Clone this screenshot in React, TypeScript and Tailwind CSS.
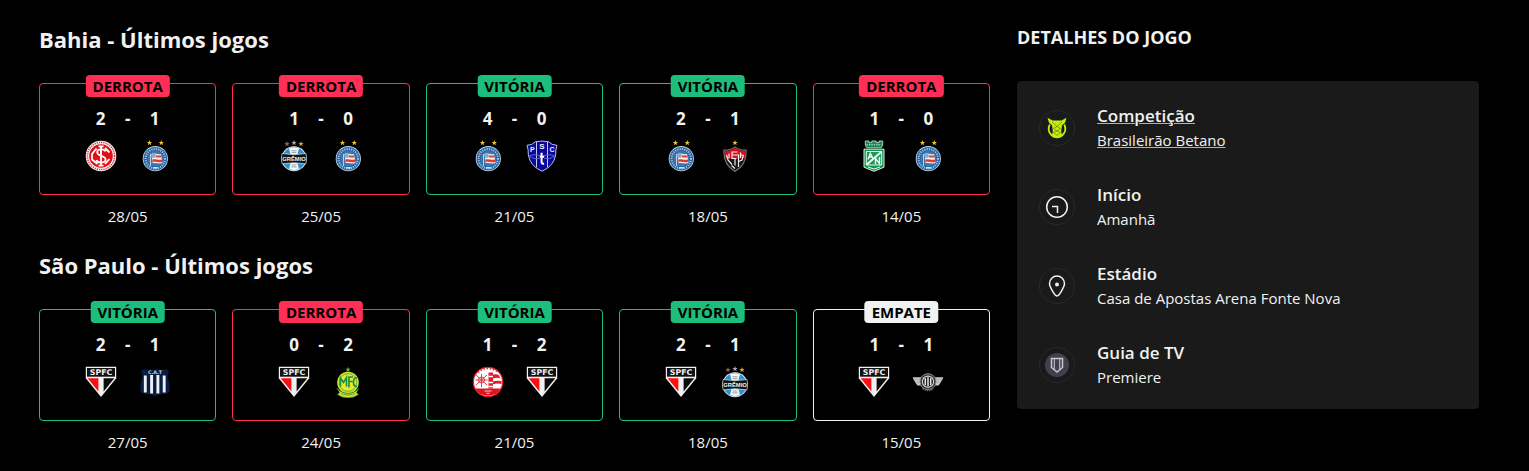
import type { ReactNode } from "react";

type Outcome = "DERROTA" | "VITÓRIA" | "EMPATE";
type Club =
  | "internacional"
  | "bahia"
  | "gremio"
  | "paysandu"
  | "vitoria"
  | "nacional"
  | "saopaulo"
  | "talleres"
  | "mirassol"
  | "nautico"
  | "libertad";

interface Match {
  outcome: Outcome;
  score: [number, number];
  clubs: [Club, Club];
  date: string;
}

const bahiaMatches: Match[] = [
  { outcome: "DERROTA", score: [2, 1], clubs: ["internacional", "bahia"], date: "28/05" },
  { outcome: "DERROTA", score: [1, 0], clubs: ["gremio", "bahia"], date: "25/05" },
  { outcome: "VITÓRIA", score: [4, 0], clubs: ["bahia", "paysandu"], date: "21/05" },
  { outcome: "VITÓRIA", score: [2, 1], clubs: ["bahia", "vitoria"], date: "18/05" },
  { outcome: "DERROTA", score: [1, 0], clubs: ["nacional", "bahia"], date: "14/05" },
];

const saoPauloMatches: Match[] = [
  { outcome: "VITÓRIA", score: [2, 1], clubs: ["saopaulo", "talleres"], date: "27/05" },
  { outcome: "DERROTA", score: [0, 2], clubs: ["saopaulo", "mirassol"], date: "24/05" },
  { outcome: "VITÓRIA", score: [1, 2], clubs: ["nautico", "saopaulo"], date: "21/05" },
  { outcome: "VITÓRIA", score: [2, 1], clubs: ["saopaulo", "gremio"], date: "18/05" },
  { outcome: "EMPATE", score: [1, 1], clubs: ["saopaulo", "libertad"], date: "15/05" },
];

const outcomeStyles: Record<Outcome, { border: string; badge: string }> = {
  DERROTA: { border: "border-[#ff2e54]", badge: "bg-[#ff2e54]" },
  VITÓRIA: { border: "border-[#1dbd7c]", badge: "bg-[#1dbd7c]" },
  EMPATE: { border: "border-[#f1f1f1]", badge: "bg-[#f1f1f1]" },
};

function Star({ x, y = 2.8, fill = "#f2c12e" }: { x: number; y?: number; fill?: string }) {
  return (
    <path
      transform={`translate(${x} ${y})`}
      d="M0-2.8.7-.9 2.7-.8 1.1.4 1.7 2.4 0 1.3-1.7 2.4-1.1.4-2.7-.8-.7-.9Z"
      fill={fill}
    />
  );
}

const crests: Record<Club, ReactNode> = {
  internacional: (
    <>
      <circle cx="16" cy="16" r="15.3" fill="#f3eeee" />
      <circle cx="16" cy="16" r="13.6" fill="none" stroke="#d9363b" strokeWidth="1.5" strokeDasharray="1.2 1" />
      <circle cx="16" cy="16" r="11.8" fill="#e00f18" />
      <g fill="none" stroke="#fff" strokeWidth="1.8">
        <path d="M16 6v20M13.5 6.3h5M13.5 25.7h5" />
        <path d="M20.5 11.5c-1-3-8.3-3-8.3.8 0 4.2 8.4 2.8 8.4 7.2 0 3.9-8 3.9-9.2.6" />
        <path d="M11.5 8.5 7 14v5.500l5.500 4.500M20 8l4.500 4.500M24.500 19 20 24" />
      </g>
    </>
  ),
  bahia: (
    <>
      <Star x={10.5} />
      <Star x={22.3} />
      <circle cx="16.3" cy="18.7" r="12.6" fill="#c3d7e8" />
      <circle cx="16.3" cy="18.7" r="11.8" fill="#2866a5" />
      <circle cx="16.3" cy="18.7" r="9.7" fill="none" stroke="#a9c5df" strokeWidth="2" strokeDasharray="1.1 1.2" />
      <circle cx="16.3" cy="18.7" r="7.6" fill="#4077ae" />
      <path d="M12.5 14c3-1.2 5 .9 9.5-.1l1.5 9.2c-4 1-6-.8-9.8 0Z" fill="#f6f1f0" />
      <path d="M17 15.2c2 .3 3 .6 5.3.1v2.1c-2.5.5-3.7 0-5.3-.2ZM13.4 19.5c3.2-.7 5.5 1 9.7.1v2.4c-3.8.8-6-.8-9.6-.1Z" fill="#e43a2e" />
      <path d="M12.3 14.1c1.8-.6 3-.2 4.3 0v3.7h-3.8Z" fill="#86aacd" />
      <path d="M11.5 14v12" stroke="#d8e4ee" strokeWidth=".8" />
      <path d="M14 27.8h4.8" stroke="#d8e4ee" strokeWidth="1.5" />
    </>
  ),
  gremio: (
    <>
      <Star x={9} y={3.8} fill="#8b6b43" />
      <Star x={16} y={2.8} fill="#a6a8b0" />
      <Star x={23} y={3.8} fill="#d8a72a" />
      <circle cx="16" cy="18.7" r="12.5" fill="#e8edf0" />
      <circle cx="16" cy="18.7" r="11.6" fill="#2993d1" />
      <path d="M11 8.3q5-2 10 0l-1.6 6.3h-6.8ZM12.6 22.8h6.8l1.6 6.2q-5 2-10 0Z" fill="#f5f7f8" />
      <path d="M13.4 10.8h5.2M13.7 12.6h4.6M13.7 25h4.6M13.4 26.9h5.2" stroke="#767d84" strokeWidth=".7" />
      <path d="M4 13.5q12 2.3 24 0 1.2 5.2 0 10.4-12-2.3-24 0-1.2-5.2 0-10.4Z" fill="#111417" stroke="#d6dce0" strokeWidth=".7" />
      <text x="16" y="20.8" textAnchor="middle" fontFamily="Liberation Sans, sans-serif" fontSize="5.8" fontWeight="700" fill="#f3f3f3">GRÊMIO</text>
    </>
  ),
  paysandu: (
    <>
      <path d="M1 5.3Q6.6 5.2 9.2 1.8q6.8-1.5 13.6 0Q25.4 5.2 31 5.3q-1.6 4.5-1.3 9.5Q28 26 16 31.2 4 26 2.3 14.8 2.6 9.8 1 5.3Z" fill="#07079d" stroke="#b8bce9" strokeWidth="1" />
      <path d="M10.5 2v25.5M21.5 2v25.5" stroke="#c7caee" strokeWidth="1" />
      <g fontFamily="Liberation Sans, sans-serif" fontWeight="700" fill="#f2f3fc" textAnchor="middle">
        <text x="16" y="9.2" fontSize="8">S</text>
        <text x="6.3" y="12.2" fontSize="7">P</text>
        <text x="26" y="12.2" fontSize="7">C</text>
      </g>
      <path d="M3.3 16q5.5-2.8 12.7.6 7.2-3.4 12.7-.6-4.5 4-10.5 2.5M3.3 16q4.5 4 10.5 2.5" fill="none" stroke="#6267c5" strokeWidth="1" />
      <path d="M15.6 12.8v9.3q0 2.1 2.5 1.4M13.8 16.7h4.4" fill="none" stroke="#fff" strokeWidth="2" />
    </>
  ),
  vitoria: (
    <>
      <Star x={16} y={2.8} />
      <path d="M4.9 10.2q7.2.2 11.1-3.3 3.9 3.5 11.1 3.3.7 15-11.1 21.2Q4.2 25.2 4.9 10.2Z" fill="#151515" stroke="#737376" strokeWidth="1.2" />
      <path d="M5.8 11q6.5 0 10.2-3 3.7 3 10.2 3 .2 4-.5 7.5H6.3q-.7-3.500-.5-7.500Z" fill="#d80e1b" />
      <g fill="none" stroke="#f4eeee" strokeWidth="1.2">
        <path d="M18.5 12h-5.5v6.5h4.5M13 15h6.5v12M16 18.5v7" />
        <path d="m7.5 15 1.5 5 4 4.500M24.500 15 23 20l-3.500 1.500" />
        <path d="M10 13.500v5M21.500 12.500v5.500M21.500 15h2.500" />
        <path d="M12.500 25.500 16 28.500" />
      </g>
    </>
  ),
  nacional: (
    <>
      <path d="M7.3 1h3.7v1.6h2.8V1h4.4v1.6H21V1h3.7v4.2l-1.5 2.6H8.8L7.3 5.2Z" fill="#0d8b50" stroke="#d5eadf" strokeWidth=".8" />
      <path d="M8.5 4.8h15" stroke="#d5eadf" strokeWidth="1" strokeDasharray="1.4 1" />
      <path d="M6 9.2h20v18L16 31.3 6 27.2Z" fill="#0d9651" stroke="#dceee4" strokeWidth="1" />
      <path d="M8.3 11.5h15.4v13.5H8.3Z" fill="#1c9a59" stroke="#eef7f1" strokeWidth="1" />
      <path d="M23.5 11.7 8.5 24.8" stroke="#eef7f1" strokeWidth="2" />
      <path d="m10 19.5 2.3-6 2.7 5M11 17h3.5M17.5 24v-5.5l4 5V17" fill="none" stroke="#f2faf5" strokeWidth="1.4" />
      <path d="m10 27 6 2 6-2" fill="none" stroke="#eef7f1" strokeWidth="1" />
    </>
  ),
  saopaulo: (
    <>
      <path d="M.8.8h30.4v11.5L16 31 .8 12.3Z" fill="#f1f1f1" />
      <path d="M2 2h28v8.7H2Z" fill="#111" />
      <path d="M2.7 12.2h10.7V25.6Z" fill="#fb0d12" />
      <path d="M18.6 12.2h10.7L18.6 25.6Z" fill="#0a0a0a" />
      <text x="16" y="9.1" textAnchor="middle" fontFamily="DejaVu Sans, sans-serif" fontSize="7.8" fontWeight="700" fill="#f2f2f2">SPFC</text>
    </>
  ),
  talleres: (
    <>
      <path d="M3.5 3.5h25l1.5 3q-2.5 2.5-1 6.5 2.5 5 1.5 12.5-1 2-6.5 2.5-4 0-8 2-4-2-8-2-5.5-.5-6.5-2.5Q.5 18 3 13q1.5-4-1-6.5Z" fill="#091c43" />
      <path d="M6.3 9.5v17M12.6 9v18.5M18.9 9v18.5M25.2 9.5v17" stroke="#eef0f4" strokeWidth="2.9" />
      <text x="16" y="7.8" textAnchor="middle" fontFamily="DejaVu Sans, sans-serif" fontSize="4.8" fontWeight="700" fill="#cbd1dd">C.A.T</text>
    </>
  ),
  mirassol: (
    <>
      <Star x={16} y={3.6} fill="#68ad32" />
      <circle cx="16" cy="16.5" r="10.8" fill="#d7df26" />
      <circle cx="16" cy="16.5" r="8.8" fill="#eee72c" stroke="#4da83c" strokeWidth=".8" />
      <path d="M8.5 20.5V12l3 4.5 3-5v9M17 21.5V11h4M17 15.5h3.5M25 12q-3.5-.8-3.5 4.5 0 4 3.5 4" fill="none" stroke="#159447" strokeWidth="1.7" />
      <path d="M5 22.5q2 2 2.5 4.5l-2 1.5q5 3.5 10.5 3.2 5.5.3 10.5-3.2l-2-1.5q.5-2.5 2.5-4.5-5 5-11 5t-11-5Z" fill="#d8df2c" stroke="#439d36" strokeWidth=".7" />
      <path d="M9 27.8q7 2.7 14 0" fill="none" stroke="#41983a" strokeWidth=".8" />
    </>
  ),
  nautico: (
    <>
      <circle cx="16" cy="16" r="15.3" fill="#e21b26" />
      <circle cx="16" cy="16" r="14" fill="#fff" />
      <path d="M6 6.5q10-8 20 0" fill="none" stroke="#df2934" strokeWidth="1.5" strokeDasharray="1.4 1.8" />
      <path d="M16.5 6.5h4.5v2q4-1 6 .8l1.3 3q-3.5-1-7.3.2v2.7q4.5-1 8.5-.2v3q-4-1-8.5.2v4.3h-4.5Z" fill="#e41c27" />
      <path d="M16.5 10.5h4.5M16.5 16.5h4.5M16.5 20.5h4.5" stroke="#fff" strokeWidth="1.5" />
      <path d="M3 22.5h25.8Q25 29.8 16 29.8T3 22.5Z" fill="#df1420" />
      <g fill="none" stroke="#dc3c44" strokeWidth="1">
        <circle cx="9.5" cy="14" r="3" />
        <path d="m4 9 11 10M15 9 4 19M9.5 8v13M3.5 14h12" />
      </g>
      <path d="M12.5 25h7M14.5 27.3h3" stroke="#f5c7ca" strokeWidth="1" />
    </>
  ),
  libertad: (
    <>
      <path d="M.7 11.2h8.5v8.3H5.5L3.6 17 1.900 14Zm30.600 0h-8.500v8.300h3.700l1.900-2.500 1.700-3Z" fill="#c8cacb" />
      <path d="M1 13.4h8M3 16h6M31 13.4h-8M29 16h-6" stroke="#8e9092" strokeWidth=".6" />
      <circle cx="16" cy="15.7" r="8" fill="#323334" stroke="#8d8f91" strokeWidth="1" />
      <circle cx="16" cy="15.7" r="5.6" fill="#191919" stroke="#d3d4d5" strokeWidth="1.2" />
      <path d="M13.3 12.2v7M16 11.2v9M18.7 12.2v7" stroke="#e7e7e7" strokeWidth="1.5" />
      <path d="M10.5 22.5q5.5 4 11 0" fill="none" stroke="#696b6c" strokeWidth="1.6" strokeDasharray="1.3 1" />
    </>
  ),
};

function Crest({ club }: { club: Club }) {
  return (
    <svg viewBox="0 0 32 32" className="size-8" aria-hidden="true">
      {crests[club]}
    </svg>
  );
}

function MatchCard({ match }: { match: Match }) {
  const style = outcomeStyles[match.outcome];
  return (
    <li className="min-w-0 flex-1 text-center">
      <article className={`relative flex flex-col items-center gap-[9px] rounded-[4px] border pt-[23px] pb-[22px] ${style.border}`}>
        <span
          className={`absolute -top-[9px] left-1/2 -translate-x-1/2 rounded-[4px] px-[7px] text-[15px] leading-[22px] font-bold text-black ${style.badge}`}
        >
          {match.outcome}
        </span>
        <div className="grid grid-cols-[32px_22px_32px] text-[17px] leading-6 font-bold">
          <span>{match.score[0]}</span>
          <span>-</span>
          <span>{match.score[1]}</span>
        </div>
        <div className="flex gap-[22px]">
          <Crest club={match.clubs[0]} />
          <Crest club={match.clubs[1]} />
        </div>
      </article>
      <time className="mt-[9px] block text-[15px] leading-6">{match.date}</time>
    </li>
  );
}

function RecentMatches({ team, matches }: { team: string; matches: Match[] }) {
  return (
    <section>
      <h2 className="text-[22px] leading-8 font-bold">{team} - Últimos jogos</h2>
      <ul className="mt-7 flex gap-4">
        {matches.map((match) => (
          <MatchCard key={match.date} match={match} />
        ))}
      </ul>
    </section>
  );
}

function LeagueIcon() {
  return (
    <svg viewBox="0 0 20 22" className="h-[22px] w-5" aria-hidden="true">
      <circle cx="10" cy="12" r="9" fill="#15163a" />
      <path d="M2.8 7.500A8.400 8.400 0 1 0 17.200 7.500" fill="none" stroke="#c4ee0b" strokeWidth="1.800" />
      <path d="M.5.800 5.500 3.500h9L19.500.800l-1.500 5-3 2.500-.8 6L15 18.500l-5 2.800-5-2.800.8-4.200-.8-6L2 5.800Z" fill="#c4ee0b" />
      <path d="m5 5 5 4.500L15 5M6.500 11.500l3.500-2 3.500 2L10 14Zm0 4L10 14l3.500 1.500-3.500 3Z" fill="none" stroke="#718c10" strokeWidth=".8" />
    </svg>
  );
}

function ClockIcon() {
  return (
    <svg viewBox="0 0 24 24" className="size-6" fill="none" stroke="#f1f1f1" strokeWidth="1.5" aria-hidden="true">
      <circle cx="12" cy="12" r="10.3" />
      <path d="M7 11.5h5.5V18" />
    </svg>
  );
}

function PinIcon() {
  return (
    <svg viewBox="0 0 24 24" className="size-6" fill="none" stroke="#f1f1f1" strokeWidth="1.5" aria-hidden="true">
      <path d="M12 22c-1.600 0-2.400-1.700-3.500-3.400-2-3.100-4-6-4-9a7.500 7.500 0 0 1 15 0c0 3-2 5.900-4 9-1.100 1.700-1.900 3.400-3.500 3.400Z" />
      <circle cx="12" cy="10.500" r="2" fill="#f1f1f1" stroke="none" />
    </svg>
  );
}

function TvIcon() {
  return (
    <svg viewBox="0 0 24 24" className="size-6" fill="none" aria-hidden="true">
      <circle cx="12" cy="12" r="12" fill="#42404f" />
      <path d="M6.5 5.5h11v9L12 19l-5.500-4.500Z" stroke="#c9c8cd" strokeWidth="1.5" />
      <path d="M9.3 6v10M14.7 6v10" stroke="#c9c8cd" strokeWidth="1" />
    </svg>
  );
}

const details = [
  { label: "Competição", value: "Brasileirão Betano", icon: <LeagueIcon />, href: "#brasileirao" },
  { label: "Início", value: "Amanhã", icon: <ClockIcon /> },
  { label: "Estádio", value: "Casa de Apostas Arena Fonte Nova", icon: <PinIcon /> },
  { label: "Guia de TV", value: "Premiere", icon: <TvIcon /> },
];

function DetailText({ label, value, underlined }: { label: string; value: string; underlined?: boolean }) {
  const underline = underlined ? "underline decoration-[#8ab8f8] decoration-1 underline-offset-1" : "";
  return (
    <>
      <span className={`block text-[17px] leading-6 font-semibold ${underline}`}>{label}</span>
      <span className={`block text-[15px] leading-6 ${underline}`}>{value}</span>
    </>
  );
}

export default function App() {
  return (
    <main className="grid min-h-screen grid-cols-[951fr_462fr] gap-[27px] bg-black pt-[23px] pr-[50px] pb-4 pl-[39px] font-['Open_Sans','Noto_Sans',sans-serif] text-[#f1f1f1]">
      <div className="flex flex-col gap-[21px]">
        <RecentMatches team="Bahia" matches={bahiaMatches} />
        <RecentMatches team="São Paulo" matches={saoPauloMatches} />
      </div>
      <aside>
        <h2 className="text-[18px] leading-7 font-bold">DETALHES DO JOGO</h2>
        <ul className="mt-[30px] flex flex-col gap-[31px] rounded-[4px] bg-[#1a1a1a] px-[22px] pt-[23px] pb-5">
          {details.map((item) => (
            <li key={item.label} className="flex items-center gap-[22px]">
              <span className="flex size-9 shrink-0 items-center justify-center rounded-full border border-[#292929]">
                {item.icon}
              </span>
              {item.href ? (
                <a href={item.href} className="min-w-0">
                  <DetailText label={item.label} value={item.value} underlined />
                </a>
              ) : (
                <div className="min-w-0">
                  <DetailText label={item.label} value={item.value} />
                </div>
              )}
            </li>
          ))}
        </ul>
      </aside>
    </main>
  );
}
